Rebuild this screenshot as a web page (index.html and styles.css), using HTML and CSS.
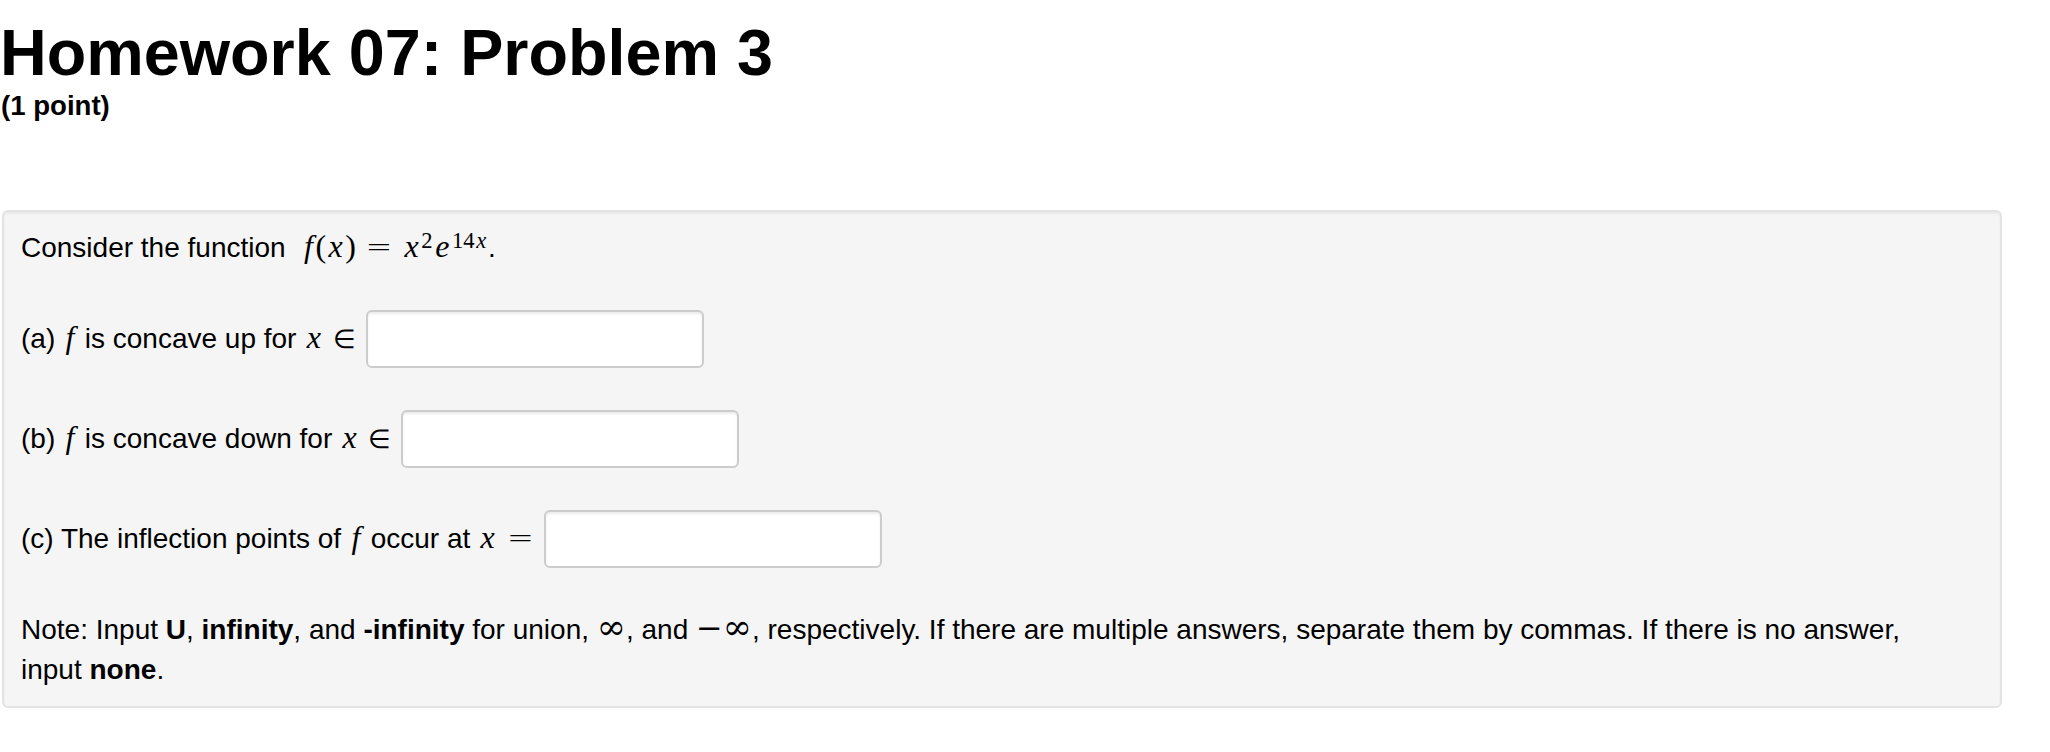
FILE: index.html
```html
<!DOCTYPE html>
<html lang="en">
<head>
<meta charset="utf-8">
<title>Homework 07: Problem 3</title>
<link rel="stylesheet" href="styles.css">
</head>
<body>
<div class="page">
  <h1 class="title">Homework 07: Problem 3</h1>
  <div class="points">(1 point)</div>
  <div class="problem">
    <p class="intro">Consider the function <span class="math lead"><i>f</i>(<i>x</i>)<span class="rel">=</span><i>x</i><sup>2</sup><i>e</i><sup>14<i>x</i></sup></span>.</p>
    <div class="row">
      <span class="label">(a) <span class="math"><i>f</i></span> is concave up for <span class="math"><i>x</i><span class="rel elem">∈</span></span></span>
      <input class="answer" type="text">
    </div>
    <div class="row">
      <span class="label">(b) <span class="math"><i>f</i></span> is concave down for <span class="math"><i>x</i><span class="rel elem">∈</span></span></span>
      <input class="answer" type="text">
    </div>
    <div class="row">
      <span class="label">(c) The inflection points of <span class="math"><i>f</i></span> occur at <span class="math"><i>x</i><span class="rel end">=</span></span></span>
      <input class="answer" type="text">
    </div>
    <p class="note"><span>Note: Input </span><b>U</b><span>, </span><b>infinity</b><span>, and </span><b>-infinity</b><span> for union, </span><span class="math"><span class="inf">∞</span></span><span>, and </span><span class="math"><span class="minus">−</span><span class="inf">∞</span></span><span>, respectively. If there are multiple answers, separate them by commas. If there is no answer,</span> <span>input </span><b>none</b><span>.</span></p>
  </div>
</div>
</body>
</html>
```

FILE: styles.css
```css
html, body {
  margin: 0;
  padding: 0;
  background: #ffffff;
}

body {
  font-family: "Liberation Sans", Arial, Helvetica, sans-serif;
  color: #000000;
}

.page {
  padding: 0 48px 0 2px;
}

.title {
  font-size: 64.7px;
  line-height: 65px;
  font-weight: bold;
  margin: 20px 0 0 -2px;
}

.points {
  font-size: 27.6px;
  line-height: 40px;
  font-weight: bold;
  margin: 1px 0 0 -1px;
}

.problem {
  margin-top: 84px;
  background: #f5f5f5;
  border: 2px solid #e3e3e3;
  border-radius: 6px;
  box-shadow: inset 0 2px 2px rgba(0, 0, 0, 0.05);
  padding: 16px 70px 16px 17px;
  font-size: 28px;
  line-height: 40px;
  display: flex;
  flex-direction: column;
  gap: 42px;
}

.intro,
.note {
  margin: 0;
}

.row {
  display: flex;
  align-items: center;
  gap: 10px;
}

.label {
  white-space: nowrap;
}

.math {
  font-family: "Liberation Serif", "Times New Roman", "DejaVu Serif", serif;
  font-size: 32px;
  line-height: 1;
  white-space: nowrap;
}

.math.lead {
  margin-left: 8px;
}

.math i {
  font-style: italic;
  padding: 0 0.08em;
}

.math sup {
  font-size: 22.6px;
  line-height: 0;
  vertical-align: 9px;
}

.rel {
  font-family: "DejaVu Sans", "Liberation Serif", serif;
  font-weight: 200;
  font-style: normal;
  margin: 0 0.3em;
}

.rel.end {
  margin-right: 0;
}

.rel.elem {
  font-size: 26px;
  margin: 0 0 0 0.35em;
}

.inf {
  font-family: "DejaVu Serif", "Liberation Serif", serif;
  font-size: 35px;
  line-height: 0;
}

.minus {
  font-family: "DejaVu Sans", "Liberation Serif", serif;
}

.answer {
  box-sizing: border-box;
  width: 338px;
  height: 58px;
  margin: 0;
  padding: 8px 12px;
  background: #ffffff;
  border: 2px solid #cccccc;
  border-radius: 6px;
  box-shadow: inset 0 2px 2px rgba(0, 0, 0, 0.075);
  font-family: inherit;
  font-size: 27.6px;
  flex: none;
}
```
